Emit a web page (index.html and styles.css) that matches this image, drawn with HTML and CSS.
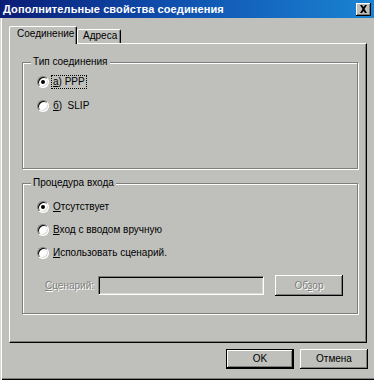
FILE: index.html
```html
<!DOCTYPE html>
<html lang="ru">
<head>
<meta charset="utf-8">
<title>Дополнительные свойства соединения</title>
<link rel="stylesheet" href="styles.css">
</head>
<body>
<div class="window">
  <div class="titlebar">
    <span class="title">Дополнительные свойства соединения</span>
    <span class="close"><svg width="9" height="8" viewBox="0 0 9 8"><path d="M1 0h2l1.5 2 1.5-2h2L5.5 4 8 8H6L4.5 6 3 8H1l2.5-4z" fill="#000"/></svg></span>
  </div>
  <div class="content">
    <div class="tabs">
      <div class="tab active">Соединение</div>
      <div class="tab">Адреса</div>
    </div>
    <div class="panel">
      <div class="group group1">
        <div class="legend">Тип соединения</div>
        <div class="radios radios1">
          <div class="radio-row"><span class="radio checked"></span><span class="focus"><u>а</u>) PPP</span></div>
          <div class="radio-row"><span class="radio"></span><span><u>б</u>)&nbsp; SLIP</span></div>
        </div>
      </div>
      <div class="group group2">
        <div class="legend">Процедура входа</div>
        <div class="radios radios2">
          <div class="radio-row"><span class="radio checked"></span><span><u>О</u>тсутствует</span></div>
          <div class="radio-row"><span class="radio"></span><span><u>В</u>ход с вводом вручную</span></div>
          <div class="radio-row"><span class="radio"></span><span><u>И</u>спользовать сценарий.</span></div>
        </div>
        <div class="script-row">
          <span class="script-label disabled"><u>С</u>ценарий:</span>
          <span class="field"></span>
          <span class="btn small disabled-btn"><span class="disabled">Об<u>з</u>ор</span></span>
        </div>
      </div>
    </div>
    <div class="buttons">
      <span class="btn default">OK</span>
      <span class="btn">Отмена</span>
    </div>
  </div>
</div>
</body>
</html>
```
FILE: styles.css
```css
* { box-sizing: border-box; margin: 0; padding: 0; }
html, body { width: 374px; height: 380px; overflow: hidden; }
body {
  font-family: "Liberation Sans", Arial, sans-serif;
  font-size: 10px;
  line-height: 12px;
  color: #000;
  background: #bfc0bc;
}
u { text-decoration: underline; text-underline-offset: 1px; }

.window {
  width: 374px;
  height: 380px;
  background: #bfc0bc;
  display: flex;
  flex-direction: column;
  box-shadow: inset 1px 0 #d8d9d5, inset 2px 0 #fff, inset 0 -1px #000, inset 0 -2px #7e7f7c;
}

.titlebar {
  height: 18px;
  flex: none;
  display: flex;
  align-items: center;
  justify-content: space-between;
  padding: 0 3px 0 3px;
  background: linear-gradient(to right, #0a1d76 0%, #0f4fae 45%, #1a84d2 100%);
  color: #fff;
  font-weight: bold;
  font-size: 11px;
}
.title { letter-spacing: 0.1px; }
.close {
  width: 15px;
  height: 13px;
  background: #bfc0bc;
  display: flex;
  align-items: center;
  justify-content: center;
  box-shadow: inset -1px -1px #000, inset 1px 1px #fff, inset -2px -2px #7e7f7c;
}

.content {
  flex: 1;
  display: flex;
  flex-direction: column;
  padding: 8px 0 0 9px;
}

.tabs {
  display: flex;
  align-items: flex-end;
  height: 17px;
  position: relative;
  z-index: 1;
}
.tab {
  height: 14px;
  width: 44px;
  padding-left: 5px;
  border: 1px solid;
  border-color: #fff #000 transparent #fff;
  border-bottom: none;
  border-radius: 2px 2px 0 0;
  box-shadow: inset -1px 0 #7e7f7c;
  background: #bfc0bc;
}
.tab.active {
  width: 68px;
  height: 18px;
  margin-bottom: -1px;
  padding-left: 7px;
  padding-top: 1px;
}

.panel {
  width: 358px;
  height: 300px;
  border: 1px solid;
  border-color: #fff #000 #000 #fff;
  box-shadow: inset -1px -1px #7e7f7c;
  display: flex;
  flex-direction: column;
  align-items: flex-start;
  padding-left: 12px;
}

.group {
  width: 336px;
  border: 1px solid #7e7f7c;
  box-shadow: 1px 1px 0 #fff, inset 1px 1px 0 #fff;
  display: flex;
  flex-direction: column;
  align-items: flex-start;
  padding-left: 14px;
}
.group1 { margin-top: 18px; height: 107px; }
.group2 { margin-top: 14px; height: 131px; }

.legend {
  margin: -7px 0 0 -6px;
  padding: 0 2px;
  background: #bfc0bc;
  line-height: 12px;
}

.radios { display: flex; flex-direction: column; }
.radios1 { margin-top: 8px; gap: 12px; }
.radios2 { margin-top: 12px; gap: 11px; }

.radio-row {
  display: flex;
  align-items: center;
  height: 12px;
  gap: 4px;
}
.radio {
  width: 12px;
  height: 12px;
  border-radius: 50%;
  background: #fff;
  border: 1px solid;
  border-color: #7e7f7c #fff #fff #7e7f7c;
  box-shadow: inset 1px 1px #000, inset -1px -1px #d8d9d5;
  display: flex;
  align-items: center;
  justify-content: center;
}
.radio.checked::after {
  content: "";
  width: 4px;
  height: 4px;
  border-radius: 50%;
  background: #000;
}
.focus {
  outline: 1px dotted #000;
  outline-offset: 0;
  padding: 0 1px;
  margin-left: -1px;
}

.script-row {
  display: flex;
  align-items: center;
  margin-top: 16px;
  margin-left: 8px;
  height: 21px;
}
.script-label { width: 53px; }
.disabled { color: #7e7f7c; text-shadow: 1px 1px 0 #fff; }
.field {
  width: 166px;
  height: 19px;
  border: 1px solid;
  border-color: #7e7f7c #fff #fff #7e7f7c;
  box-shadow: inset 1px 1px #000, inset -1px -1px #d8d9d5;
  background: #bfc0bc;
}

.btn {
  width: 68px;
  height: 20px;
  display: flex;
  align-items: center;
  justify-content: center;
  background: #bfc0bc;
  box-shadow: inset -1px -1px #000, inset 1px 1px #fff, inset -2px -2px #7e7f7c;
}
.btn.small { height: 21px; margin-left: 11px; }
.btn.default {
  border: 1px solid #000;
  box-shadow: inset -1px -1px #000, inset 1px 1px #fff, inset -2px -2px #7e7f7c;
}

.buttons {
  display: flex;
  justify-content: flex-end;
  gap: 6px;
  padding-right: 6px;
  margin-top: 6px;
}
```
